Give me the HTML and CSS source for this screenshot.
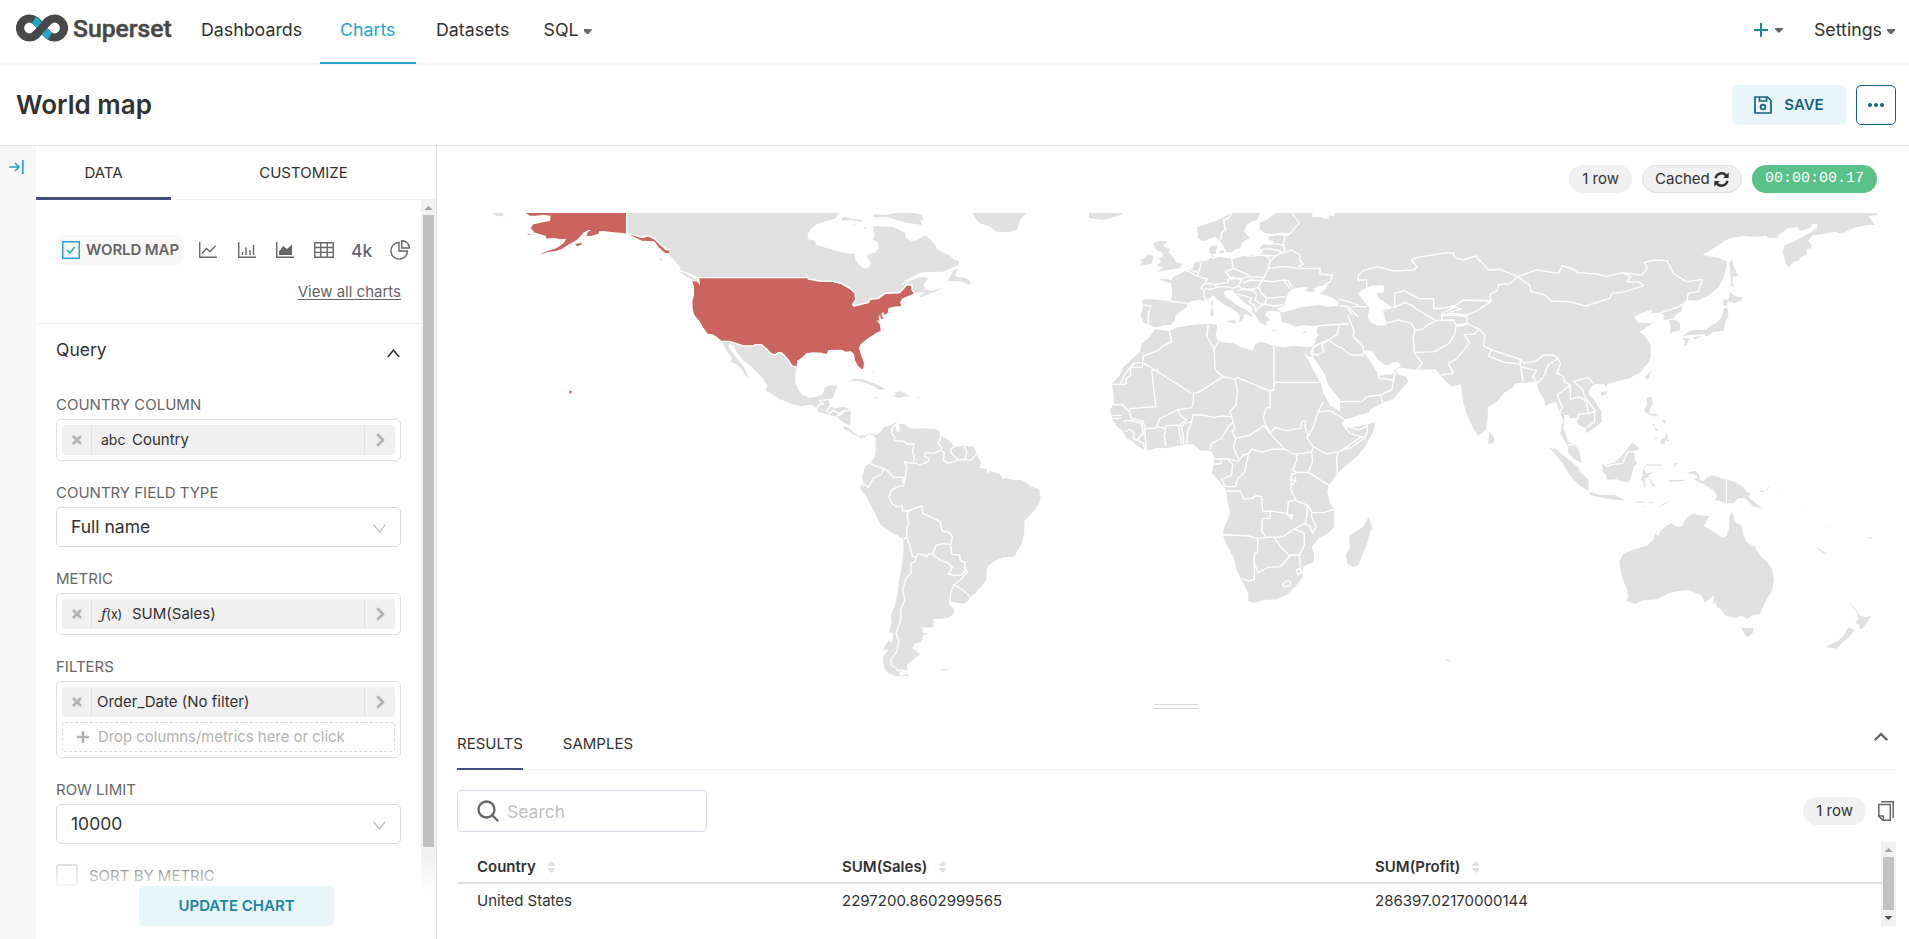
FILE: index.html
```html
<!DOCTYPE html>
<html lang="en">
<head>
<meta charset="utf-8">
<title>World map</title>
<link rel="stylesheet" href="styles.css">
</head>
<body>
<div class="app">
  <nav class="nav">
    <div class="brand">
      <svg class="brand-mark" width="52" height="28" viewBox="0 0 52 28">
        <path class="loop" d="M26 14C21 7.500 18 4.500 13.500 4.500a9.500 9.500 0 0 0 0 19C18 23.500 21 20.500 26 14S34 4.500 38.500 4.500a9.500 9.500 0 0 1 0 19C34 23.500 31 20.500 26 14"/>
        <path class="loop-blue" d="M18 6c2.600 1.800 5 4.800 8 8 2.900 3.800 5.300 6.600 8 8.300"/>
        <path class="loop" d="M18.500 21.500c2.300-1.600 4.800-4.200 7.500-7.500s5.100-6.200 7.500-7.800"/>
      </svg>
      <span class="brand-name">Superset</span>
    </div>
    <a class="nav-item">Dashboards</a>
    <a class="nav-item active">Charts</a>
    <a class="nav-item">Datasets</a>
    <a class="nav-item sql">SQL <i class="caret"></i></a>
    <div class="nav-right">
      <a class="nav-plus"><svg width="14" height="14" viewBox="0 0 14 14"><path d="M7 0v14M0 7h14" stroke="#1a85a0" stroke-width="2"/></svg><i class="caret"></i></a>
      <a class="nav-settings">Settings <i class="caret"></i></a>
    </div>
  </nav>
  <header class="header">
    <h1>World map</h1>
    <button class="save"><svg width="18" height="18" viewBox="0 0 18 18" fill="none" stroke="#156378" stroke-width="1.700"><path d="M1 1h12.500L17 4.500V17H1zM5.500 1v4h7V1"/><circle cx="9" cy="11" r="2.400"/></svg>SAVE</button>
    <button class="more"><i></i><i></i><i></i></button>
  </header>
  <main class="main">
    <aside class="rail"><svg width="15" height="14" viewBox="0 0 15 14" fill="none" stroke="#20a7c9" stroke-width="1.700"><path d="M0 7h10M6 3l4 4-4 4M13.800 0v14"/></svg></aside>
    <section class="panel">
      <div class="tabs"><div class="tab on">DATA</div><div class="tab">CUSTOMIZE</div></div>
      <div class="scroll">
        <div class="controls">
          <div class="viz">
            <div class="viz-row">
              <div class="pill"><svg width="18" height="18" viewBox="0 0 18 18" fill="none" stroke="#20a7c9" stroke-width="1.500"><path d="M.75.75h16.500v16.500H.75zM5 9l3 3 4.500-6"/></svg>WORLD MAP</div>
              <svg class="vi v1" width="18" height="16" viewBox="0 0 18 16"><path d="M.75 0v15.200H18M3 11.500l4.500-5 3.500 3L16.500 4"/></svg>
              <svg class="vi v2" width="18" height="16" viewBox="0 0 18 16"><path d="M.75 0v15.200H18M4.500 13v-3M8 13V5.500M12 13V8M15.500 13V3"/></svg>
              <svg class="vi v3" width="18" height="16" viewBox="0 0 18 16"><path d="M.75 0v15.200H18"/><path class="solid" d="M3 13V9.500L7 4l4 3 5-4.500V13z"/></svg>
              <svg class="vi v4" width="20" height="16" viewBox="0 0 20 16"><path d="M.75.75h18.500v14.500H.75zM.75 5.500h18.500M.75 10.400h18.500M6.800.75v14.500M13.200.75v14.500"/></svg>
              <span class="k4">4k</span>
              <svg class="vi v6" width="21" height="20" viewBox="0 0 21 20"><path d="M9 2.500a8.300 8.300 0 1 0 8.500 8.500H9zM11.700.8V8h7.800a7.500 7.500 0 0 0-7.800-7.200z"/></svg>
            </div>
            <a class="all">View all charts</a>
          </div>
          <div class="query"><span>Query</span><svg width="13" height="9" viewBox="0 0 13 9" fill="none" stroke="#323232" stroke-width="1.500"><path d="M.8 8 6.500 1.200 12.200 8"/></svg></div>
          <div class="fields">
            <div class="field"><label>COUNTRY COLUMN</label><div class="box"><div class="chip"><span class="x"><svg width="10" height="10" viewBox="0 0 10 10"><path d="M1 1l8 8M9 1 1 9"/></svg></span><span class="txt"><small>abc</small>Country</span><span class="go"><svg width="9" height="14" viewBox="0 0 9 14"><path d="M1.200 1.200 7 7l-5.800 5.800"/></svg></span></div></div></div>
            <div class="field"><label>COUNTRY FIELD TYPE</label><div class="select">Full name<svg width="13" height="9" viewBox="0 0 13 9"><path d="M.7.700l5.800 7.500L12.300.7"/></svg></div></div>
            <div class="field"><label>METRIC</label><div class="box"><div class="chip"><span class="x"><svg width="10" height="10" viewBox="0 0 10 10"><path d="M1 1l8 8M9 1 1 9"/></svg></span><span class="txt"><small class="fx"><em>ƒ</em>(x)</small>SUM(Sales)</span><span class="go"><svg width="9" height="14" viewBox="0 0 9 14"><path d="M1.200 1.200 7 7l-5.800 5.800"/></svg></span></div></div></div>
            <div class="field"><label>FILTERS</label><div class="box"><div class="chip"><span class="x"><svg width="10" height="10" viewBox="0 0 10 10"><path d="M1 1l8 8M9 1 1 9"/></svg></span><span class="txt plain">Order_Date (No filter)</span><span class="go"><svg width="9" height="14" viewBox="0 0 9 14"><path d="M1.200 1.200 7 7l-5.800 5.800"/></svg></span></div><div class="drop"><svg width="12" height="12" viewBox="0 0 12 12"><path d="M6 0v12M0 6h12" stroke="#b2b2b2" stroke-width="2.400"/></svg>Drop columns/metrics here or click</div></div></div>
            <div class="field"><label>ROW LIMIT</label><div class="select">10000<svg width="13" height="9" viewBox="0 0 13 9"><path d="M.7.700l5.800 7.500L12.300.7"/></svg></div></div>
            <div class="check"><i></i>SORT BY METRIC</div>
          </div>
        </div>
        <div class="bar"><i class="up"></i><i class="thumb"></i></div>
      </div>
      <div class="footer"><button class="update">UPDATE CHART</button></div>
    </section>
    <section class="content">
      <div class="chips"><span class="tag">1 row</span><span class="tag cached">Cached <svg width="15" height="15" viewBox="0 0 15 15" fill="none" stroke="#323232" stroke-width="2.400"><path d="M1.600 6.300A6 6 0 0 1 12.500 4M13.400 8.700A6 6 0 0 1 2.500 11"/><path fill="#323232" stroke="none" d="M14.700.5v5.600H9.100zM.3 14.500V8.900h5.600z"/></svg></span><span class="tag timer">00:00:00.17</span></div>
      <svg class="map" width="1420" height="463" viewBox="457 213 1420 463">
        <g transform="translate(480 200) scale(.33333)">
          <g class="land">
            <path d="M32 39H70V49L50 48ZM442 39H1075L1068 55 1050 60 1030 66 1010 73 995 85 983 100 984 118 1003 122 1010 135 1030 141 1060 150 1090 158 1124 162 1127 180 1140 197 1155 207 1168 200 1172 187 1160 170 1165 163 1185 158 1196 145 1195 130 1180 118 1185 105 1180 90V77L1210 80 1240 80 1258 90 1275 98 1278 115 1300 125 1320 115 1334 104 1350 118 1368 138 1370 148 1390 158 1410 167 1425 180 1437 183 1436 195 1415 203 1390 215 1350 216 1320 218 1300 228 1275 242 1262 257 1285 245 1310 235 1330 231 1345 235 1330 255 1338 268 1355 272 1384 264 1365 275 1345 283 1322 292 1320 288 1335 277 1302 278 1297 270V255L1280 254 1270 265 1258 277 1215 279 1195 295 1170 297 1165 305 1130 316 1120 316 1128 300 1127 278 1110 263 1085 250 1060 243 1020 242 985 236 980 228 975 232H655L632 222 600 209 602 203 580 178 568 165V151L540 132 520 115 505 107 485 115 460 103 442 101Z"/>
            <path d="M592 213 615 219 635 230 650 240 657 250 645 243 625 233 605 220ZM534 175l14 2-2 7ZM1437 206 1425 222 1430 230 1455 234 1470 242V255L1450 247 1435 243 1402 244 1410 230 1420 212ZM1178 43 1220 45 1245 39H1310L1325 45 1330 60 1320 63 1328 75 1280 68 1250 60 1220 50 1180 51ZM1085 55 1095 50 1118 57 1145 60 1150 66 1110 60 1085 62ZM1115 75l15-3-10 5ZM1150 80h8l-1 10ZM1480 39H1640L1620 60 1612 88 1585 97 1550 95 1530 80 1500 70 1485 55Z"/>
            <path d="M725 424H748L770 431 790 438H822L825 434 845 436 862 450 872 461 885 466 895 459 905 461 925 482 935 497 949 502 947 520 945 545 955 570 968 585 988 593 1010 590 1028 583 1035 562 1050 556H1073L1065 575 1060 590 1052 597 1050 620 1065 625 1080 622 1095 621 1113 630 1112 650 1110 676 1095 670 1080 660 1070 650 1050 645 1030 640 1015 635 1010 625 995 615 975 616 960 619 930 610 900 598 880 585 858 572 862 555 850 538 830 515 812 498 790 480 770 455 760 435 748 432 745 440 755 455 775 480 790 498 800 520 808 534 795 524 785 508 770 493 752 485 757 475 745 460 733 440Z"/>
            <path d="M1090 678 1108 684 1120 697 1135 707 1155 706 1170 699 1185 703 1190 716 1180 706 1168 702 1155 712 1145 716 1130 708 1118 702 1105 692 1092 688ZM1103 545 1120 537 1145 537 1165 545 1190 553 1217 568 1195 570 1185 560 1160 550 1135 543 1115 543ZM1242 576 1265 574 1290 588 1270 590 1258 595 1240 588 1250 583ZM1180 591l15 1-8 3ZM1305 591l15 1-6 3ZM1175 512l5 2 1 9Z"/>
          </g>
          <g class="us">
            <path d="M136 39H440V101L430 99 400 97 370 93 357 94 355 101 335 107 320 109 322 98 333 90 325 90 310 98 300 110 290 120 275 128 262 136 245 147 230 152 205 156 175 164 200 154 225 146 240 138 252 128 258 116 240 118 228 115 215 114 200 116 197 107 180 103 165 98 152 85 160 73 175 70 190 67 210 63 212 47 190 44 165 47 150 47ZM440 101 465 106 485 114 505 108 525 118 540 133 555 147 568 151V160L555 158 545 150 535 140 523 124 505 123 485 122 465 112ZM285 133 303 128 306 133 292 139ZM140 101l12 1-4 3ZM84 61l8 1 16 4ZM268 571l9 4-4 6-5-3Z"/>
            <path d="M658 234H980L985 238 1020 244 1060 246 1085 253 1108 266 1124 280 1125 300 1117 312 1120 319 1140 316 1167 308 1170 299 1195 297 1215 281 1258 280 1272 266 1280 256H1294L1295 272 1303 280 1285 288 1268 295 1260 307 1264 318 1240 320 1225 325 1223 340 1213 345 1210 336 1203 342 1210 355 1203 358 1200 345 1195 350 1198 362 1190 360 1200 375 1202 392 1190 398 1175 407 1160 418 1142 432 1137 445 1145 470 1152 490 1150 505 1145 508 1132 495 1125 480 1122 462 1112 453 1098 455 1085 449 1045 450 1040 462 1025 458 1000 457 980 459 965 473 952 482 949 501 935 496 925 480 912 463 900 457 890 460 885 465 872 460 862 448 845 435 825 433 822 437 790 437 770 431 748 424 725 423 710 410 698 403 683 401 670 383 658 362 643 345 639 330 637 305 642 285V260L637 243 652 246 660 256Z"/>
          </g>
          <path class="border" d="M440 39V101L465 105 485 113 505 107 525 117 540 132 556 147 568 151M655 233H978L980 228 985 237 1020 243 1060 244 1085 251 1110 265 1126 279 1127 300 1118 313 1122 318 1165 307 1170 297 1195 295 1215 280 1258 278 1272 264 1280 254 1296 255 1297 270 1304 280M725 424 748 424 770 431 790 438 822 438 825 434 845 434 862 449 872 461 885 465 895 458 905 459 925 480 935 497 949 502M1010 625 1020 612 1032 612 1018 602 1048 598 1052 615 1040 635M1045 642 1060 631 1075 641 1095 632H1113M1070 648 1085 642 1095 632"/>
        </g>
        <g transform="translate(840 400) scale(.33333)">
          <path class="land" d="M106 105 125 95 130 82 155 75 175 63 165 75 170 95 180 95 178 72 192 72 205 82 225 86 250 85 280 87 290 88 300 97 298 105 310 110 325 120 335 130 342 140 372 137 400 140 408 155 415 175 424 188 418 203 440 207 443 222 450 213 480 223 488 237 495 233 520 240 545 240 575 260 597 268 602 290 597 312 575 340 553 363V395L545 432 530 455 528 465 515 471 490 472 465 482 445 497 440 512V537L425 558 405 580 388 593 385 602 370 611 350 608 330 605 325 610 345 632 340 643 325 653 300 657H281L280 682 247 683 249 700 265 700 248 708 245 726 225 730 217 745 240 762 235 768 215 782 200 795 205 812 190 814 175 820 185 828H165L145 820 135 808 130 790 129 770 145 750 130 749 140 730 145 724 157 726 161 698 148 697 145 710 150 685 155 670 153 645 165 615 173 580 177 540 185 500 190 450V418L175 408 150 395 122 375 110 350 95 320 80 292 62 268 60 258 70 250 66 232 75 200 90 190 105 170 108 150ZM185 826l18-4 5 4-8 3ZM299 811l13-5 8 2 12-4-10 7ZM289 82l6-1-2 5Z"/>
          <path class="border" d="M172 68 157 85 155 100 165 112 163 122 195 124 200 132 222 132 218 155 223 175 221 190 193 186 200 200 197 225 192 250 187 242 190 232 160 232 145 215 130 205 108 198 90 190M222 188 240 196 265 185 268 175 253 170 258 157 280 160 303 150 305 142 293 130 300 118 305 105M303 150 312 158 310 180 322 190 345 184 355 180 345 170 335 160 331 148 343 140M355 180 375 178 380 155 373 140M375 178 393 181 412 160M130 205 125 222 100 235 85 262 75 255 67 255M195 255 175 260 155 270 147 290 155 310 170 320 187 318 188 333 205 333 230 322 246 318 248 340 275 352 300 365 307 393 328 397 337 412 332 433 335 463 358 465 362 483 377 487 373 503 383 515 360 540 342 555 365 567 388 588M332 433 310 431 288 436 278 463 300 480 325 490 337 502 325 522 345 526 365 525 377 508M342 555 332 575 330 605M205 333 202 350 206 370 200 390 200 410 192 418M200 410 210 440 217 470 228 470 235 461 255 465 258 471 268 461 278 463M228 470 225 485 213 490V520L198 535 188 570 195 600 183 625 183 655 175 680 168 700 177 725 170 755 153 780V795L168 803 170 810 203 813"/>
        </g>
        <g transform="translate(1090 200) scale(.33333)">
          <path class="land" d="M-3 39H97L92 45 70 52 40 60 15 57-3 53ZM425 39 405 48 380 62 350 72 321 82 325 115 335 123 350 121 375 110 388 120 398 135 410 157 425 157 435 148 450 145 458 125 478 115 475 108 462 95 470 75 485 65 500 60 508 45 510 39ZM357 145 368 136 383 137 378 150 378 162 366 163 358 158ZM386 155l15-5 4 7-12 4ZM205 122 232 125 218 138 240 148 235 155 250 172 258 186 277 191 270 205 245 208 197 216 220 203 200 197 215 185 205 178 220 170 215 155 203 153 195 145 190 130ZM172 162 190 168 185 190 150 198 158 185 148 180 165 175ZM361 327l9 0 1 20-10 2ZM363 306l5-2 1 14-5 2ZM408 362 438 360 435 372ZM535 390h25v3ZM633 397l22-4-12 8Z"/>
          <path class="land" d="M840 39H560L545 48 530 60 508 68 510 90 525 100 550 102 575 98 600 100 590 108 560 105 535 110 538 120 550 124 545 135 520 133 508 145 520 155 505 165 485 165 490 172 460 168 430 178 405 173 392 170 378 174 366 164 358 176 350 182 315 187 308 203 297 210 285 212 270 221 250 230 245 240 230 237 208 238 220 243 242 250 247 270 245 295 240 303 200 299 165 297 155 305 160 318 152 345 160 370 175 371 190 381 205 381 220 376 243 375 255 360 255 350 270 335 290 322 292 310 305 303 330 299 342 303 355 297 370 286 380 297 400 313 430 328 447 343 450 357 443 370 463 355 460 345 470 343 485 352 487 345 470 330 445 318 425 302 405 290 402 275 415 270 428 270 440 285 460 305 485 322 487 337 500 350 510 368 528 377 530 365 540 360 525 345 530 335 548 332 570 335 572 345 575 365 600 372 615 380 640 376 665 378 684 378 680 395 685 405 678 415 670 440 660 460 675 480 690 500 705 525 715 555 735 580 750 600 765 655 770 658 840 635ZM630 440H672L666 472 655 468 638 455Z"/>
          <path class="sea" d="M667 39V52L692 50 705 58 717 55 715 47 733 47V39ZM583 318 588 295 597 275 610 266 630 262 655 262 645 272 660 277 678 272 668 268 685 258 715 255 705 270 690 280 725 292 745 305 745 318 715 320 690 315 640 320 605 330 575 338 560 325Z"/>
          <path class="border" d="M160 315 182 318 175 345 175 370M240 303 292 310M285 210 325 230 352 237 345 250 332 265 342 270 342 290 348 302M297 208 325 218 330 205 335 187M325 218V230M375 175 362 170M425 175 430 205 405 215 420 232 412 248 380 253 345 250M375 252 380 262 362 268 345 266M380 262 412 260 430 265 445 258 455 240 445 235 415 237 412 250M430 205 470 222 480 230 455 235 440 235 420 232M480 230 522 232 535 205 540 185 535 170 512 165 490 168M522 232 515 242 480 240 458 250M515 242 505 262 485 268 455 265 445 258M515 242 550 245 580 240 600 265M575 240 595 242 607 262M505 262 515 280 530 295 560 292 585 290M530 295 525 312 550 318 580 315M485 268 500 285 495 300 510 312 525 312M440 272 460 268 485 272M440 280 485 295 478 305 490 318M490 310 498 335 505 322 525 312M535 205 580 200 635 205M540 185 560 165 580 158 605 150 630 165 630 180 640 192 625 200M635 205 690 205 690 222 728 225 720 245 702 256M510 150 530 145 560 150 580 158M508 165 560 168M545 130 580 135 585 155M585 105 580 135M605 39 628 70 600 100 590 108M425 39 415 55 402 58 403 80 408 88 395 98 392 118M745 298 800 312 825 322 840 320M768 325 800 325 830 345M785 325 795 342 820 350M775 345 795 342M780 370 775 345M680 378 720 375 780 370 795 395 790 410 820 440 822 460M750 375 740 405 715 420 780 463 822 465M715 420 695 435 702 455 685 465 668 462M672 440 690 430 715 420M668 440V470M762 600 810 605 840 590M840 240 815 240 805 235 820 215 840 205"/>
        </g>
        <g transform="translate(1090 310) scale(.33333)">
          <path class="land" d="M195 58 238 63 262 52 320 43 365 42 382 45 380 60 378 75 382 90 400 97 430 100 450 110 487 121 498 100 515 95 550 107 580 112 610 107 635 110 640 125 655 150 672 185 690 215 700 250 720 285 750 305 765 320 765 330 755 340 765 350 780 354 830 343 856 337 850 365 825 410 800 440 770 465 742 490 725 515 715 530 712 550 720 580 733 600V650L715 670 690 682 665 710 672 730V755L640 770 638 800 620 825 590 855 560 868 520 870 490 880 475 872 475 850 455 810 440 780 430 740 410 705 400 680V660L420 610 412 570 410 550 405 535 385 510 365 490 372 460V440L362 422H330L310 403H285L260 408 230 415 200 413 170 422 145 410 130 395 110 385 100 365 80 348 68 330 60 300 72 280 70 250 65 222 90 195 100 170 125 148 150 125 155 100 180 80ZM836 620 848 655 840 665 832 700 805 765 790 771 772 762 768 735 780 710 777 680 800 662 820 650Z"/>
          <path class="border" d="M238 63 245 95 215 110 205 122 180 130 160 138 158 157 130 160 122 172 105 192 90 222M65 223H108V205L122 198V172H158V157L295 243 300 250 325 247 400 200M355 45 350 80 370 110 373 130 375 180 400 200 432 208 442 203 540 243 552 240V107M373 118 380 105 388 95M552 217H690M540 243V292L528 295 520 325 530 350M435 208 443 240 438 285 420 305 425 320 395 318 370 322 340 315 310 315 305 335M310 250V275L305 293 262 300M205 180 185 182 197 290 120 296 118 305M70 285 95 283 118 305 125 325 160 335 165 355H200M262 300 240 310 210 325 200 350 225 355M262 300 275 320 290 330 270 345 228 347 222 380 228 410M165 355V375L170 422M265 347 270 375 275 402M272 345 280 375 281 402M290 403 292 370 305 335 285 340 275 350M68 325H95M68 316H95M100 333 125 332 155 340 160 370 150 378 140 392 130 385 133 370 120 358 105 365M138 388 160 400 165 420M360 420 365 400 395 385 415 350 430 335M425 320 435 358 425 365 438 385 430 410 447 450M372 447H415L447 455M438 385 480 375 522 347 540 370 583 417M447 450 460 435 475 432 485 417 515 427 545 418 583 417M530 350 540 370 555 353 590 362 632 355 635 335 647 332 645 350 655 378 670 350 685 305 700 275M685 305 720 302 750 320 765 330M655 378 650 383 670 410 665 425 640 430 610 432 583 417M670 410 710 432 745 425 785 412 825 383 780 370 760 345M825 383 832 365V343M745 425 740 440 742 490M665 425 668 455 655 487 718 527M620 487H655M620 432V450L608 480 620 487 603 495V540L618 570M605 510 618 512 615 500M605 525 618 512M372 462H392V450M415 452 428 462 425 495 395 508 405 530M475 432 465 485 445 505 435 530 405 530M408 543H450L462 567 485 565 498 557 515 560 518 605 540 603 590 610 605 627 608 615 592 615 595 575 618 570M540 603V625H516V665L530 682M400 675 420 675 475 678 500 685 555 680M503 685V730H493V808L475 813 455 805M495 765 505 788 535 772 570 770 600 738 575 715 553 683 580 680 612 657 643 670V705L628 735H600M612 657 645 640 652 610 650 585 618 572M652 585 665 605 665 620 678 650 668 670 660 650 645 640M665 608 700 608 732 598M628 735 632 780 640 790M590 812 603 815 598 828 580 830 578 822ZM620 780l10-3 5 10-10 7-6-8Z"/>
        </g>
        <g transform="translate(1340 200) scale(.35714 .33333)">
          <path class="land" d="M0 39H1504V45L1480 49 1498 74 1475 75 1440 83 1405 101 1385 95 1350 103 1325 105 1310 122 1320 133V145L1308 147 1305 165 1290 170 1285 182 1270 185 1255 203 1248 190 1240 155 1245 135 1270 125 1295 110 1320 95 1335 85 1338 72 1322 73 1318 82 1290 93 1280 82 1255 84 1225 108 1228 113 1198 115 1195 107 1160 110 1130 108 1092 114 1060 135 1015 165 1050 172 1065 175 1082 185V200L1075 230 1060 262 1030 288 998 302 975 300 960 315 955 335 940 345 935 358 952 370V390L925 400V375L920 360 905 358 908 345 895 337 870 342 875 328 855 335 823 350 835 368 875 370 855 385 840 395 855 410 870 435V470L862 490 840 518 810 535 780 542 750 552 745 562 740 552 715 552 700 565 695 580 715 605 732 635 733 665 715 682 690 700 688 685 668 675 662 655 645 655 640 645H628V670L625 690 632 705 640 735 655 740 668 755 675 780 650 770 640 760 638 740 618 702 620 685 622 660 615 640 605 605 590 610 575 618 572 600 555 570 550 550 545 545 520 548 490 550 485 562 460 578 440 605 415 620 413 655 408 690 388 708 375 690 360 655 345 610 338 553 315 560 300 548 280 525 268 507 215 510 170 503 155 507 165 525 185 530 192 545 170 570 150 597 120 608 85 628 45 645 14 657 0 640Z"/>
          <path class="land" d="M1098 178 1103 200 1115 227 1100 230 1098 245 1105 260 1095 258 1093 220 1090 190ZM1092 277 1110 290 1127 292 1125 300 1105 310 1085 303 1085 315 1072 317 1072 300 1088 298ZM1075 325H1085L1088 345 1078 370 1075 392 1045 396 1025 410 1020 402 985 405 960 408 975 395 990 390 1025 390 1035 378 1050 372 1070 350ZM958 415 978 415 970 437 963 435 967 425ZM988 412l20-4 2 4-18 6ZM870 512l-3 15-8 15-5-12ZM730 577 750 573 745 583 733 588ZM418 693 432 715 430 730 415 732Z"/>
          <path class="sea" d="M60 270 90 257 122 255 123 277 103 280 108 295 130 310 145 325 120 332 125 350 132 375 105 377 85 365 78 350 82 325 65 300 50 283ZM65 455 75 450 90 453 105 478 130 497 150 487 165 487 170 500 155 507 148 522 110 527 100 510 88 490Z"/>
          <path class="border" d="M75 265 75 240 50 240 52 225 65 212 105 200 150 213 208 210 215 200 200 180 215 172 300 158 318 160 320 172 345 180 380 168 417 210 450 208 498 230 550 210 612 220 622 197 658 210 665 218 720 222 745 230 790 218 845 225 860 205 853 188 880 180 915 182 935 222 970 245 1015 238 1003 275 975 280 972 302 950 320 900 338M498 230 530 255 535 275 575 285 590 303 640 305 688 318 755 295 762 280 800 275 850 257 835 245 803 245 815 230 790 218M918 360l25-5M498 230 475 252 445 253 440 272 420 283 423 303 345 300 325 315 290 325 262 325 262 297 220 295 180 272 153 280V322M133 320 153 322 180 307 200 315 225 335 270 362 285 360V342L320 320 340 328 310 335M423 305 380 335 355 345 320 340 300 340M285 345 318 345 355 350V370M125 370 165 360 200 370 210 390 230 388 245 375 270 362 318 360 325 375 355 370 390 388 375 403H348L363 428 325 478 303 490 317 520 283 525M355 375 325 380 320 405 305 430 265 455 208 458 205 410 210 390M208 458 230 490 215 510M390 388 405 405 402 438 425 450 505 478 515 490 545 485 570 465 597 465 610 475 618 490 607 520 625 528 628 545 645 555 608 585 622 620 615 640 625 670M425 450 415 468 460 487 505 493V478M505 493 513 545M507 500 550 512 540 530 552 550 570 530 583 495 610 475M645 555V598L670 590 690 605 695 640 668 642 665 660M655 545 680 570 685 590 713 630V665L690 683M652 545 695 533 710 550M695 640 713 635M638 738h18M0 605 60 605 75 590 113 585 120 608M113 585 145 570 150 540 110 535 105 523M150 540 155 515M0 298 40 310 55 320M0 318 25 320 50 350M20 322 35 345M35 320 75 320M22 345 40 395 37 410 65 440 65 465M0 372 25 372M0 440 30 465H65M5 670 50 690 75 680 75 670M0 755 60 710"/>
        </g>
        <g transform="translate(1500 380) scale(.33333)">
          <path class="land" d="M180 160 190 145 205 185 225 195 237 210 245 248 225 240 205 215 203 195ZM440 52 456 52 458 70 448 90V100L475 105 465 110 435 97 433 88 440 75ZM500 155 506 185 495 180 493 195 480 188 485 175 495 175ZM459 179l12-9 3 4ZM485 118l12 5-2 9ZM463 142l10 5 0 8-7-4ZM456 131l11 5-5 3ZM146 203 168 206 185 222 210 242 235 262 240 277 265 298 266 332 240 318 222 300 205 278 190 252 168 225ZM268 335 300 345 345 345 375 361 340 359 300 352 270 345ZM306 248 312 255 345 247 360 232 378 212 397 186 418 205 402 215 405 240 412 250 400 262 398 275 388 305 370 307 350 298 322 299 318 285 308 275ZM432 270 440 256 480 258 488 250 480 254 440 253 430 268 428 285 422 300 430 303 431 328 436 320 435 295 447 290 455 315 462 320 467 318 456 305 448 290 445 285 462 276 440 280ZM522 248l8 2-4 14ZM463 322l5 0-3 5ZM475 383 490 370 512 364 490 375ZM400 366l25-3 15 4-20 1ZM440 366l24 0-10 3ZM428 376l10 6-6-1ZM505 301l50-2 0 4-46 3ZM560 278 585 272 597 285 600 300 610 304 620 293 640 286 665 295 680 298 710 308 730 320 738 335 752 340 745 350 770 372 788 385 760 380 745 365 735 355 715 355 700 370 680 370 655 362 643 360 652 350 640 330 605 310 585 300 580 297 595 295 590 285ZM768 333 795 333 808 318 805 327 790 336ZM838 332l12 10-3-1ZM583 400 590 405 627 408 612 438 640 455 668 473 680 468 688 440V410L696 393 705 425 725 437 730 465 740 487 765 500 780 527 800 545 817 567 822 600 815 635 797 663 780 702 760 705 740 717 725 708 708 714 678 708 665 690 650 680 648 665 640 675 643 645 615 668 603 645 565 630 535 633 505 640 472 658 430 661 405 671 378 662 385 655 382 630 365 590 358 545 370 522 395 510 440 497 460 480 465 462 475 467 480 455 497 438 515 430 530 440H545L560 412ZM723 743 760 744V757L743 773 735 765ZM1048 670 1068 688 1078 705 1095 712 1113 708 1105 722 1085 747 1077 745 1080 735 1065 728 1077 715 1070 697ZM1045 742 1064 750 1045 773 1030 785 1010 806 980 802 985 795 1010 785 1030 768ZM950 500 980 521 976 524 950 504ZM1103 471h13l-4 6ZM896 376l10 1-4 2ZM978 440l4 1-2 5Z"/>
          <path class="border" d="M312 253 322 258 340 253 368 250 383 216 412 214M378 212l-5-3M679 296V370M203 195l17 0"/>
        </g>
        <path class="land" d="M1445 659l5 1-2 2z"/>
      </svg>
      <div class="grip"><i></i><i></i></div>
      <div class="results">
        <div class="rtabs"><div class="rtab on">RESULTS</div><div class="rtab">SAMPLES</div><svg class="collapse" width="14" height="9" viewBox="0 0 14 9" fill="none" stroke="#666" stroke-width="2.400" stroke-linecap="round"><path d="M1.500 7.500 7 2l5.500 5.500"/></svg></div>
        <div class="tools">
          <div class="search"><svg width="22" height="22" viewBox="0 0 22 22" fill="none" stroke="#666" stroke-width="2.300" stroke-linecap="round"><circle cx="9.500" cy="9.500" r="8"/><path d="m15.500 15.500 5 5"/></svg>Search</div>
          <span class="tag">1 row</span>
          <svg class="copy" width="16" height="20" viewBox="0 0 16 20" fill="none" stroke="#666" stroke-width="1.500"><path d="M3 .8h12.200V17"/><path d="M.8 3.500h11.500v15.700H5L.8 15.500z"/><path d="M.8 15h4.500v4"/></svg>
        </div>
        <div class="tablewrap">
          <div class="table">
            <div class="row head"><span>Country<b class="sort"></b></span><span>SUM(Sales)<b class="sort"></b></span><span>SUM(Profit)<b class="sort"></b></span></div>
            <div class="row"><span>United States</span><span>2297200.8602999565</span><span>286397.02170000144</span></div>
          </div>
          <div class="bar small"><i class="up"></i><i class="thumb"></i><i class="down"></i></div>
        </div>
      </div>
    </section>
  </main>
</div>
</body>
</html>
```
FILE: styles.css
```css
* { box-sizing: border-box; }
body { margin: 0; font-family: Inter, "Liberation Sans", sans-serif; font-size: 15px; color: #323232; background: #fff; }
button { font: inherit; border: 0; padding: 0; }
svg { display: block; flex: none; }
.app { width: 1909px; height: 939px; display: flex; flex-direction: column; overflow: hidden; }

.nav { height: 65px; flex: none; display: flex; border-bottom: 2px solid #f5f5f5; font-size: 17.8px; line-height: 59px; padding: 0 14px 0 16px; }
.brand { display: flex; width: 165px; }
.brand-mark { margin-top: 14px; }
.loop, .loop-blue { fill: none; stroke: #484848; stroke-width: 8.2; }
.loop-blue { stroke: #20a7c9; }
.brand-name { font: 500 24.7px/57px Roboto, sans-serif; color: #484848; margin-left: 5px; -webkit-text-stroke: .5px #484848; }
.nav-item { height: 64px; padding: 0 20px; white-space: nowrap; }
.nav-item:first-of-type { width: 139px; }
.sql { padding-left: 14px; }
.active { width: 96px; color: #20a7c9; border-bottom: 2px solid #20a7c9; }
.caret { display: inline-block; width: 8px; height: 5px; background: #666; clip-path: polygon(0 0, 100% 0, 100% 30%, 60% 100%, 40% 100%, 0 30%); vertical-align: 2px; }
.nav-right { margin-left: auto; display: flex; gap: 31px; }
.nav-plus { display: flex; align-items: center; gap: 7px; height: 60px; }

.header { height: 81px; flex: none; border-bottom: 1px solid #e0e0e0; display: flex; align-items: center; padding: 0 13px 0 16px; gap: 10px; }
h1 { margin: 0 auto 0 0; font-size: 26px; font-weight: 600; line-height: 34px; }
.save { width: 114px; height: 40px; border-radius: 5px; background: #e9f6f9; color: #156378; font-weight: 600; display: flex; align-items: center; justify-content: center; gap: 12px; padding-bottom: 1px; }
.more { width: 40px; height: 40px; border: 1px solid #156378; border-radius: 5px; background: #fff; display: flex; align-items: center; justify-content: center; gap: 2px; }
.more i { width: 4px; height: 4px; border-radius: 50%; background: #156378; }

.main { flex: 1; display: flex; min-height: 0; }
.rail { width: 36px; background: #f7f7f7; padding: 14px 0 0 9px; }
.panel { width: 401px; border-right: 1px solid #e0e0e0; display: flex; flex-direction: column; position: relative; }
.tabs { height: 54px; flex: none; display: flex; border-bottom: 1px solid #f0f0f0; line-height: 54px; text-align: center; }
.tab { flex: 1; }
.tab.on { flex: 0 0 135px; height: 54px; border-bottom: 3px solid #444e7c; }
.scroll { flex: 1; min-height: 0; display: flex; overflow: hidden; }
.controls { flex: 1; min-width: 0; }
.viz { height: 124px; border-bottom: 1px solid #f0f0f0; padding: 35px 20px 0; }
.viz-row { display: flex; align-items: center; height: 30px; width: 358px; }
.pill { flex: none; width: 128px; height: 30px; border-radius: 8px; background: #f7f7f7; font-weight: 600; color: #666; display: flex; align-items: center; gap: 6px; padding: 0 0 1px 6px; white-space: nowrap; margin-right: 15px; letter-spacing: -.1px; }
.vi { fill: none; stroke: #666; stroke-width: 1.4; }
.vi .solid { fill: #666; stroke: none; }
.v1, .v2, .v3 { margin-right: 20px; }
.v1 { margin-right: 21px; }
.k4 { flex: none; font-size: 17.5px; font-weight: 500; color: #666; width: 38px; padding-left: 17px; margin-right: 18px; }
.all { display: block; text-align: right; margin-top: 16px; line-height: 22px; color: #666; text-decoration: underline; text-underline-offset: 2px; }
.query { height: 71px; padding: 14px 21px 0 20px; display: flex; justify-content: space-between; font-size: 17.5px; line-height: 24px; }
.query svg { margin-top: 11px; }
.fields { padding: 0 20px; }
.field { margin-bottom: 22px; }
.field label { display: block; height: 20px; line-height: 20px; margin-bottom: 4px; color: #666; }
.box { border: 1px solid #e0e0e0; border-radius: 5px; padding: 5px; }
.chip { height: 30px; background: #f0f0f0; border-radius: 3px; display: flex; line-height: 30px; }
.x, .go { width: 30px; display: flex; align-items: center; justify-content: center; border-right: 1px solid #e0e0e0; }
.go { border-right: 0; border-left: 1px solid #e0e0e0; width: 31px; }
.x path, .go path { fill: none; stroke: #b2b2b2; stroke-width: 2.7; }
.txt { flex: 1; padding-left: 9px; display: flex; }
.txt small { width: 31px; font-size: 14px; }
.txt .fx { font-size: 13px; letter-spacing: -.3px; }
.fx em { font: italic 15px "DejaVu Serif", serif; }
.plain { padding-left: 5px; }
.drop { height: 30px; margin-top: 5px; border: 1px dashed #d9d9d9; border-radius: 3px; color: #b2b2b2; display: flex; align-items: center; gap: 9px; padding: 0 0 1px 14px; font-size: 14.9px; white-space: nowrap; }
.select { height: 40px; border: 1px solid #d9d9d9; border-radius: 5px; display: flex; align-items: center; justify-content: space-between; padding: 0 14px 2px; font-size: 17.5px; }
.select path { fill: none; stroke: #bfbfbf; stroke-width: 1.3; }
.select svg { margin-top: 5px; }
.check { display: flex; align-items: center; gap: 11px; margin-top: -2px; height: 22px; color: #666; }
.check i { width: 22px; height: 22px; border: 2px solid #d9d9d9; border-radius: 3px; }
.bar { flex: none; width: 15px; background: #f1f1f1; display: flex; flex-direction: column; align-items: center; }
.up, .down { width: 8px; height: 4px; background: #a0a0a0; clip-path: polygon(50% 0, 100% 100%, 0 100%); margin: 6px 0 5px; flex: none; }
.down { background: #505050; clip-path: polygon(0 0, 100% 0, 50% 100%); }
.thumb { width: 11px; height: 632px; background: #c1c1c1; flex: none; }
.footer { position: absolute; left: 0; right: 0; bottom: 0; height: 81px; background: linear-gradient(rgba(255,255,255,0), #fff 43%); padding-left: 103px; display: flex; align-items: flex-end; padding-bottom: 13px; }
.update { width: 195px; height: 40px; border-radius: 5px; background: #e9f6f9; color: #1a85a0; font-weight: 600; padding-bottom: 1px; }

.content { flex: 1; padding: 0 13px 0 20px; min-width: 0; }
.chips { display: flex; justify-content: flex-end; gap: 10px; padding: 19px 19px 20px 0; }
.tag { height: 28px; line-height: 28px; border-radius: 14px; background: #f0f0f0; padding: 0 13px; white-space: nowrap; }
.cached { border: 1px solid #e0e0e0; width: 100px; line-height: 26px; display: flex; align-items: center; gap: 4px; padding: 0 12px; }
.timer { background: #5ac189; color: #fff; font: 15px/28px "Liberation Mono", monospace; width: 125px; }
.map { overflow: hidden; }
.land { fill: #e0e0e0; }
.us { fill: #cb645e; }
.sea { fill: #fff; }
.border { fill: none; stroke: #fff; stroke-width: 1.4; vector-effect: non-scaling-stroke; stroke-linejoin: round; }
.grip { width: 45px; height: 5px; margin: 28px 0 0 697px; display: flex; flex-direction: column; justify-content: space-between; }
.grip i { height: 1px; background: #d9d9d9; }
.rtabs { display: flex; gap: 40px; margin-top: 9px; height: 52px; border-bottom: 1px solid #f0f0f0; line-height: 51px; }
.rtab { height: 52px; }
.rtab.on { border-bottom: 2px solid #444e7c; }
.collapse { margin: 14px 8px 0 auto; }
.tools { display: flex; align-items: center; margin-top: 20px; height: 42px; }
.search { width: 250px; height: 42px; border: 1px solid #d9dae8; border-radius: 5px; display: flex; align-items: center; gap: 8px; padding-left: 19px; font-size: 17.5px; color: #bfbfbf; margin-right: auto; }
.copy { margin: 0 2px 0 12px; }
.tablewrap { display: flex; margin-top: 10px; height: 84px; }
.table { flex: 1; }
.row { display: grid; grid-template-columns: 365px 533px 1fr; padding-left: 20px; height: 34px; line-height: 34px; }
.head { height: 42px; line-height: 50px; border-bottom: 2px solid #e0e0e0; font-weight: 600; }
.sort { display: inline-block; width: 7px; height: 12px; margin-left: 12px; background: #e0e0e0; vertical-align: -1px; clip-path: polygon(50% 0, 100% 30%, 100% 42%, 0 42%, 0 58%, 100% 58%, 100% 70%, 50% 100%, 0 70%, 0 30%); }
.small .thumb { height: 53px; }
```
